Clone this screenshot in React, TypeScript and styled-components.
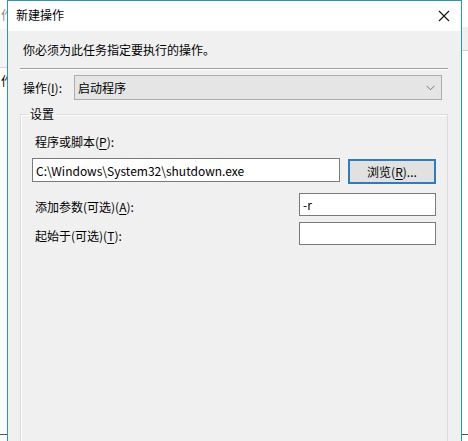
import React from 'react';
import styled, { createGlobalStyle } from 'styled-components';

const GlobalStyle = createGlobalStyle`
  html, body {
    margin: 0;
    padding: 0;
    width: 468px;
    height: 441px;
    overflow: hidden;
    background: #fff;
  }
  body {
    font-family: "Noto Sans CJK SC", "Microsoft YaHei", sans-serif;
    font-size: 12px;
    color: #000;
  }
`;

const Desktop = styled.div`
  position: relative;
  width: 468px;
  height: 441px;
  overflow: hidden;
  background: #fff;
`;

// the task window sitting behind the dialog
const BackWindow = styled.div`
  position: absolute;
  inset: 0;
  display: flex;
  justify-content: space-between;
`;

const Strip = styled.div`
  width: 7px;
  height: 100%;
  display: flex;
  flex-direction: column;
  overflow: hidden;
`;

const StripRow = styled.div<{ $h: number; $bg?: string; $line?: string; $tone?: string }>`
  height: ${(p) => p.$h}px;
  flex: none;
  display: flex;
  align-items: center;
  padding-left: 1px;
  white-space: nowrap;
  background: ${(p) => p.$bg || 'transparent'};
  border-bottom: ${(p) => (p.$line ? `1px solid ${p.$line}` : 'none')};
  color: ${(p) => p.$tone || '#000'};
`;

const Dialog = styled.div`
  position: absolute;
  left: 7px;
  top: 0;
  width: 453px;
  height: 460px;
  border: 1px solid #2f93b4;
  display: flex;
  flex-direction: column;
  background: #f0f0f0;
`;

const TitleBar = styled.div`
  height: 30px;
  flex: none;
  background: #fff;
  display: flex;
  align-items: center;
  justify-content: space-between;
  padding: 0 11px 0 8px;
`;

const Title = styled.span`
  font-size: 12px;
  line-height: 16px;
  margin-top: -2px;
`;

const CloseIcon = () => (
  <svg width="12" height="12" viewBox="0 0 12 12">
    <path d="M1 1 L11 11 M11 1 L1 11" stroke="#111" strokeWidth="1.1" fill="none" />
  </svg>
);

const Body = styled.div`
  flex: 1;
  padding: 0 13px 0 12px;
  display: flex;
  flex-direction: column;
`;

const Hint = styled.div`
  line-height: 16px;
  margin: 11px 0 0 3px;
`;

const Separator = styled.div`
  margin: 10px 0 0 0;
  border-top: 1px solid #a0a0a0;
  border-bottom: 1px solid #fff;
`;

const ActionRow = styled.div`
  display: flex;
  align-items: center;
  margin-top: 5px;
  padding-left: 3px;
`;

const Label = styled.span<{ $nudge?: number }>`
  line-height: 16px;
  white-space: nowrap;
  padding-top: ${(p) => p.$nudge || 0}px;
`;

const Key = styled.u`
  text-decoration: underline;
  text-underline-offset: 2px;
`;

const Select = styled.div`
  margin-left: auto;
  margin-right: 6px;
  width: 357px;
  height: 23px;
  border: 1px solid #adadad;
  background: #e5e5e5;
  display: flex;
  align-items: center;
  justify-content: space-between;
  padding: 0 6px 0 3px;
  box-sizing: content-box;
`;

const Chevron = () => (
  <svg width="9" height="6" viewBox="0 0 9 6">
    <path d="M0.5 0.8 L4.5 4.8 L8.5 0.8" stroke="#777" strokeWidth="1" fill="none" />
  </svg>
);

const Group = styled.fieldset`
  margin: 6px 0 0 0;
  padding: 0 11px;
  flex: 1;
  border: 1px solid #dcdcdc;
  box-shadow: inset 1px 1px 0 #fff;
  min-width: 0;
`;

const Legend = styled.legend`
  padding: 0 2px;
  margin-left: -4px;
  line-height: 16px;
`;

const FieldLabel = styled.div`
  line-height: 16px;
  margin: 12px 0 0 3px;
`;

const PathRow = styled.div`
  display: flex;
  gap: 8px;
  margin-top: 8px;
`;

const TextBox = styled.div<{ $w?: number; $h: number }>`
  box-sizing: border-box;
  width: ${(p) => (p.$w ? `${p.$w}px` : 'auto')};
  flex: ${(p) => (p.$w ? 'none' : '1')};
  height: ${(p) => p.$h}px;
  border: 1px solid #7a7a7a;
  background: #fff;
  display: flex;
  align-items: center;
  padding: 0 3px;
  white-space: nowrap;
  overflow: hidden;
`;

const Button = styled.div`
  box-sizing: border-box;
  width: 88px;
  height: 25px;
  margin-top: 1px;
  border: 2px solid #2d7cc1;
  background: #e1e1e1;
  display: flex;
  align-items: center;
  justify-content: center;
`;

const OptionRow = styled.div<{ $top: number }>`
  display: flex;
  justify-content: space-between;
  align-items: center;
  margin-top: ${(p) => p.$top}px;
  padding-left: 3px;
`;

export default function App() {
  return (
    <Desktop>
      <GlobalStyle />
      <BackWindow>
        <Strip>
          <StripRow $h={29} $tone="#8a8a8a">作</StripRow>
          <StripRow $h={38} $bg="#f4f4f4" $line="#d6d6d6" />
          <StripRow $h={24}>作</StripRow>
          <StripRow $h={342} />
          <StripRow $h={1} $bg="#555" />
        </Strip>
        <Strip>
          <StripRow $h={27} />
          <StripRow $h={23} $bg="#f0f0f0" $line="#d0d0d0" />
          <StripRow $h={383} />
          <StripRow $h={1} $bg="#555" />
        </Strip>
      </BackWindow>

      <Dialog>
        <TitleBar>
          <Title>新建操作</Title>
          <CloseIcon />
        </TitleBar>
        <Body>
          <Hint>你必须为此任务指定要执行的操作。</Hint>
          <Separator />
          <ActionRow>
            <Label>
              操作(<Key>I</Key>):
            </Label>
            <Select>
              <span>启动程序</span>
              <Chevron />
            </Select>
          </ActionRow>
          <Group>
            <Legend>设置</Legend>
            <FieldLabel>
              程序或脚本(<Key>P</Key>):
            </FieldLabel>
            <PathRow>
              <TextBox $h={24}>C:\Windows\System32\shutdown.exe</TextBox>
              <Button>
                浏览(<Key>R</Key>)...
              </Button>
            </PathRow>
            <OptionRow $top={9}>
              <Label $nudge={4}>
                添加参数(可选)(<Key>A</Key>):
              </Label>
              <TextBox $w={137} $h={23}>-r</TextBox>
            </OptionRow>
            <OptionRow $top={6}>
              <Label $nudge={4}>
                起始于(可选)(<Key>T</Key>):
              </Label>
              <TextBox $w={137} $h={23} />
            </OptionRow>
          </Group>
        </Body>
      </Dialog>
    </Desktop>
  );
}
